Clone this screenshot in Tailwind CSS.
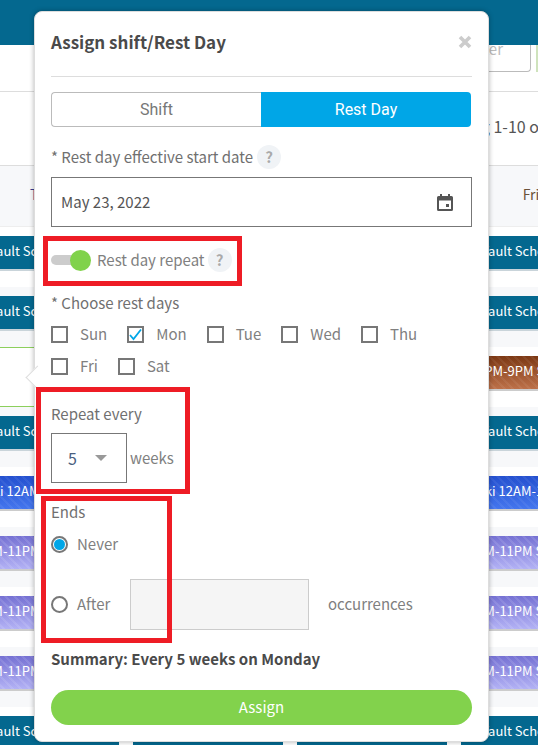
<!DOCTYPE html>
<html lang="en">
<head>
    <meta charset="UTF-8">
    <meta name="viewport" content="width=device-width, initial-scale=1.0">
    <title>Assign shift</title>
    <script src="https://cdn.jsdelivr.net/npm/@tailwindcss/browser@4"></script>
</head>
<body class="relative w-[538px] h-[745px] overflow-hidden bg-white font-['Noto_Sans_CJK_SC','Noto_Sans',sans-serif] text-[15px] text-[#808080]">

    <!-- Page behind the popover -->
    <div class="h-[45px] bg-[#04688f]"></div>
    <div class="h-[47px] border-b border-[#ddd] flex items-start">
        <div class="ml-[440px] w-[91px] h-[27px] border border-t-0 border-[#bbb] rounded-b overflow-hidden text-right pr-[27px] text-[#bbb] leading-[8px]">Filter</div>
        <div class="ml-[5px] w-[2px] h-[27px] bg-[#cfe3bd]"></div>
    </div>
    <div class="h-[74px] border-b border-[#ddd] flex items-center pl-[425px] pb-[6px] whitespace-nowrap text-[16px] text-[#555]">Showing 1-10 of 20</div>
    <div class="h-[61px] bg-[#f7f8fa] border-b border-[#eee] grid grid-cols-[150px_150px_150px_150px] gap-x-[14px] ml-[-31px] w-[700px] items-center text-center text-[14px] pb-[3px]">
        <div class="text-[#3a3f8f] pr-[4px]">Tue</div><div></div><div></div><div class="text-[#6b5138] pr-[10px]">Fri</div>
    </div>
    <div id="rows"></div>

    <!-- Popover -->
    <div class="absolute left-[34px] top-[11px] w-[455px] h-[731px] bg-white rounded-[8px] border border-[#ddd] shadow-[0_0_5px_rgba(0,0,0,0.3)] px-[16px]">
        <div class="absolute left-[-6px] top-[357px] w-[17px] h-[17px] rotate-45 bg-white border-l border-b border-[#ddd]"></div>
        <div class="relative">
            <div class="h-[65px] border-b border-[#ddd] flex items-center justify-between pb-[4px]">
                <h1 class="text-[17px] font-bold text-[#4a4a4a]">Assign shift/Rest Day</h1>
                <svg class="w-[14px] h-[14px]" viewBox="0 0 14 14"><path d="M2 2l10 10M12 2L2 12" stroke="#ccc" stroke-width="3.6"/></svg>
            </div>

            <div class="mt-[15px] h-[35px] flex font-['Roboto',sans-serif] text-[16px]">
                <div class="w-[210px] border border-[#bbb] border-r-0 rounded-l-[4px] flex items-center justify-center text-[#777]">Shift</div>
                <div class="w-[210px] bg-[#00a6e7] rounded-r-[4px] flex items-center justify-center text-white">Rest Day</div>
            </div>

            <div class="mt-[18px] h-[24px] flex items-center gap-[4px] text-[#707070]">
                <span>* Rest day effective start date</span>
                <span class="w-[24px] h-[24px] rounded-full bg-[#f0f3f6] flex items-center justify-center font-bold text-[#aaa]">?</span>
            </div>

            <div class="mt-[8px] h-[50px] border border-[#777] flex items-center justify-between pl-[9px] pr-[18px] text-[#555]">
                <span>May 23, 2022</span>
                <svg class="w-[16px] h-[17px]" viewBox="0 0 16 17" fill="#555"><path d="M3 0h2v2h6V0h2v2h1.500A1.500 1.500 0 0 1 16 3.500v12a1.500 1.500 0 0 1-1.500 1.500h-13A1.500 1.500 0 0 1 0 15.500v-12A1.500 1.500 0 0 1 1.500 2H3V0zM2 6.500V15h12V6.500H2zm7 3.500h3v3H9v-3z"/></svg>
            </div>

            <div class="mt-[21px] h-[24px] flex items-center">
                <div class="relative w-[40px] h-[20px]">
                    <div class="absolute left-0 top-[5px] w-[30px] h-[10px] rounded-full bg-[#ccc]"></div>
                    <div class="absolute left-[19px] top-0 w-[21px] h-[21px] rounded-full bg-[#80d24b]"></div>
                </div>
                <span class="ml-[6px]">Rest day repeat</span>
                <span class="ml-[3px] w-[24px] h-[24px] rounded-full bg-[#f0f3f6] flex items-center justify-center font-bold text-[#aaa]">?</span>
            </div>

            <div class="mt-[20px] h-[22px] flex items-center text-[#707070]">* Choose rest days</div>

            <div class="mt-[11px] flex gap-x-[20px] h-[18px] items-center">
                <label class="flex items-center gap-[12px]"><span class="w-[17px] h-[17px] border-2 border-[#777]"></span>Sun</label>
                <label class="flex items-center gap-[12px]"><span class="w-[17px] h-[17px] border-2 border-[#777] flex items-center justify-center"><svg class="w-[13px] h-[13px]" viewBox="0 0 13 13"><path d="M1 7l3.500 4L12 1.500" fill="none" stroke="#00a6e7" stroke-width="1.800"/></svg></span>Mon</label>
                <label class="flex items-center gap-[12px]"><span class="w-[17px] h-[17px] border-2 border-[#777]"></span>Tue</label>
                <label class="flex items-center gap-[12px]"><span class="w-[17px] h-[17px] border-2 border-[#777]"></span>Wed</label>
                <label class="flex items-center gap-[12px]"><span class="w-[17px] h-[17px] border-2 border-[#777]"></span>Thu</label>
            </div>
            <div class="mt-[14px] flex gap-x-[20px] h-[18px] items-center">
                <label class="flex items-center gap-[12px]"><span class="w-[17px] h-[17px] border-2 border-[#777]"></span>Fri</label>
                <label class="flex items-center gap-[12px]"><span class="w-[17px] h-[17px] border-2 border-[#777]"></span>Sat</label>
            </div>

            <div class="mt-[28px] h-[22px] flex items-center text-[#707070]">Repeat every</div>
            <div class="mt-[8px] flex items-center gap-[3px]">
                <div class="w-[76px] h-[50px] border border-[#777] flex items-center pl-[16px] text-[#4a6080] text-[16px]">
                    5
                    <span class="ml-[18px] w-0 h-0 border-x-[6px] border-x-transparent border-t-[6px] border-t-[#999]"></span>
                </div>
                <span>weeks</span>
            </div>

            <div class="mt-[18px] h-[22px] flex items-center text-[#707070]">Ends</div>
            <div class="mt-[11px] h-[20px] flex items-center gap-[9px]">
                <span class="w-[17px] h-[17px] rounded-full border-2 border-[#777] flex items-center justify-center"><span class="w-[11px] h-[11px] rounded-full bg-[#00a6e7]"></span></span>
                Never
            </div>
            <div class="mt-[25px] flex items-center">
                <span class="w-[17px] h-[17px] rounded-full border-2 border-[#777]"></span>
                <span class="ml-[9px] w-[53px]">After</span>
                <div class="w-[179px] h-[51px] bg-[#f5f5f5] border border-[#ccc]"></div>
                <span class="ml-[19px]">occurrences</span>
            </div>

            <div class="mt-[18px] h-[22px] flex items-center font-bold text-[#4a4a4a]">Summary: Every 5 weeks on Monday</div>

            <div class="mt-[20px] h-[35px] rounded-full bg-[#82d24c] flex items-center justify-center text-white">Assign</div>
        </div>
    </div>

    <!-- Red annotation boxes -->
    <div class="absolute left-[43px] top-[236px] w-[199px] h-[50px] border-[5px] border-[#ee1c25]"></div>
    <div class="absolute left-[36px] top-[387px] w-[154px] h-[107px] border-[5px] border-[#ee1c25]"></div>
    <div class="absolute left-[41px] top-[496px] w-[131px] h-[147px] border-[5px] border-[#ee1c25]"></div>

    <script>
        const TEAL = "bg-[#04688f] border-b-2 border-[#c9d4da]";
        const BLUE = "bg-[repeating-linear-gradient(45deg,rgba(255,255,255,0.06)_0_2px,transparent_2px_6px),linear-gradient(#2450cf,#4476ee)] border-b-2 border-[#ccc]";
        const PURPLE = "bg-[repeating-linear-gradient(45deg,rgba(255,255,255,0.1)_0_2px,transparent_2px_6px),linear-gradient(#7571d3,#b3b2f5)] border-b-2 border-[#ccc]";
        const BROWN = "bg-[repeating-linear-gradient(45deg,rgba(255,255,255,0.06)_0_2px,transparent_2px_6px),linear-gradient(#7c3814,#bd7149)] border-b-2 border-[#ccc]";

        const rows = [
            { bar: TEAL, text: "Default Schedule", pad: "pl-[7px]" },
            { bar: TEAL, text: "Default Schedule", pad: "pl-[7px]" },
            { bar: BROWN, text: "1PM-9PM Shift", pad: "pl-[16px]", picked: true },
            { bar: TEAL, text: "Default Schedule", pad: "pl-[7px]" },
            { bar: BLUE, text: "Aki 12AM-11PM Shift", pad: "pl-[16px]" },
            { bar: PURPLE, text: "11AM-11PM Shift", pad: "pl-[1px]" },
            { bar: PURPLE, text: "11AM-11PM Shift", pad: "pl-[1px]" },
            { bar: PURPLE, text: "11AM-11PM Shift", pad: "pl-[1px]" },
            { bar: TEAL, text: "Default Schedule", pad: "pl-[7px]" }
        ];

        document.getElementById("rows").innerHTML = rows.map((r, i) => {
            const cell = `<div class="${r.bar} ${r.pad} h-[35px] leading-[30px] text-[13px] text-white whitespace-nowrap overflow-hidden">${r.text}</div>`;
            const first = r.picked
                ? `<div class="h-[60px] mt-[-9px] bg-white border border-[#8ccf5c] rounded"></div>`
                : cell;
            return `<div class="h-[60px] pt-[9px] w-[700px] ml-[-31px] grid grid-cols-[150px_150px_150px_150px] gap-x-[14px] items-start ${i % 2 ? "bg-[#f7f8fa]" : "bg-white"}">${first}${cell}${cell}${cell}</div>`;
        }).join("");
    </script>
</body>
</html>
